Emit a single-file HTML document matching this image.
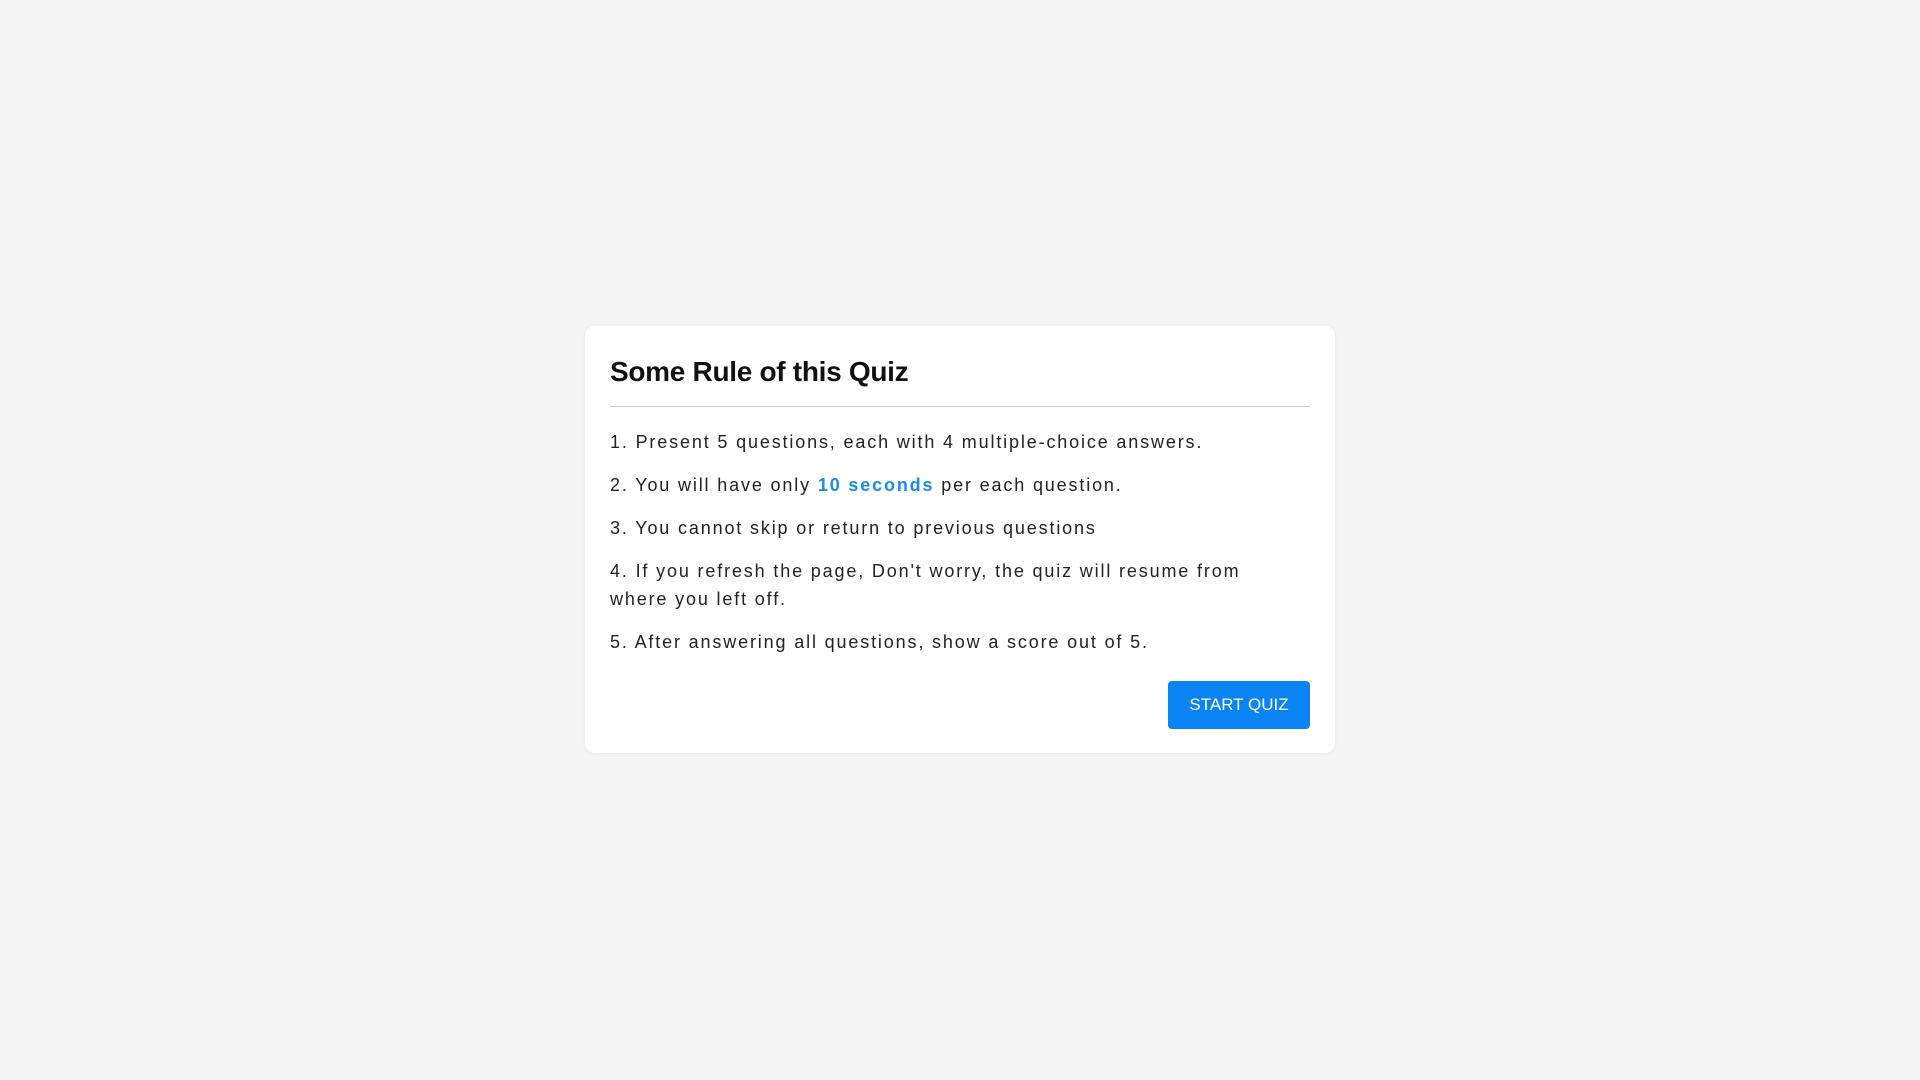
<!DOCTYPE html>
<html><head><meta charset="utf-8"><style>
html,body{margin:0;padding:0;width:1920px;height:1080px;background:#f5f5f5;font-family:"Liberation Sans",sans-serif;}
.card{position:absolute;left:585px;top:326px;width:750px;height:427px;background:#fff;border-radius:10px;box-shadow:0 1px 4px rgba(0,0,0,0.06);box-sizing:border-box;padding:0 25px;}
.t{position:absolute;left:25px;top:30px;font-size:28px;font-weight:bold;color:#111;letter-spacing:-0.3px;}
.hr{position:absolute;left:25px;right:25px;top:80px;height:1px;background:#ccc;}
.list{position:absolute;left:25px;right:25px;top:102px;font-size:18px;letter-spacing:1.85px;color:#222;line-height:28px;}
.list p{margin:0 0 15px 0;}
.b{color:#1a8cf0;font-weight:bold;}
.btn{position:absolute;left:583px;top:355px;width:142px;height:48px;background:#0a84f5;color:#fff;border-radius:4px;font-size:17px;display:flex;align-items:center;justify-content:center;}
</style></head><body>
<div class="card">
<div class="t">Some Rule of this Quiz</div>
<div class="hr"></div>
<div class="list">
<p>1. Present 5 questions, each with 4 multiple-choice answers.</p>
<p>2. You will have only <span class="b">10 seconds</span> per each question.</p>
<p>3. You cannot skip or return to previous questions</p>
<p>4. If you refresh the page, Don't worry, the quiz will resume from<br>where you left off.</p>
<p>5. After answering all questions, show a score out of 5.</p>
</div>
<div class="btn">START QUIZ</div>
</div>
</body></html>
